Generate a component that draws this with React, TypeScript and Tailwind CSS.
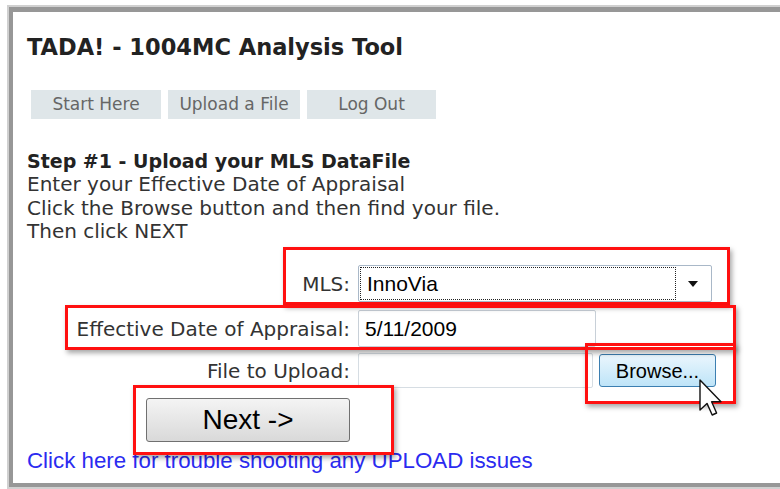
import React from 'react';

const navItems = [
  { label: 'Start Here', width: 'w-[130px]' },
  { label: 'Upload a File', width: 'w-[132px]' },
  { label: 'Log Out', width: 'w-[129px]' },
];

// Red callout boxes drawn on top of the form
const callouts = [
  'left-[283px] top-[247px] w-[447px] h-[58px]',
  'left-[65px] top-[305px] w-[671px] h-[45px]',
  'left-[585px] top-[343px] w-[151px] h-[61px]',
  'left-[133px] top-[385px] w-[261px] h-[70px]',
];

function Cursor() {
  return (
    <svg width="24" height="38" viewBox="0 0 12 19" className="absolute left-[699px] top-[379px]">
      <path
        d="M0.5 0.5 L0.5 15.5 L4 12.2 L6.6 18 L8.8 17 L6.3 11.4 L11 11.4 Z"
        fill="#fff"
        stroke="#111"
        strokeWidth="0.7"
        strokeLinejoin="round"
      />
    </svg>
  );
}

export default function App() {
  return (
    <div className="relative w-[780px] h-[489px] overflow-hidden bg-white pt-[5px] pl-[7px]">
      <div className="h-[484px] border-t-2 border-l-2 border-b-2 border-[#d0d0d0]">
        <div className="h-full border-t-[5px] border-l-[4px] border-b-[4px] border-[#979797] bg-white pl-[14px] pt-[22px] font-['DejaVu_Sans',sans-serif]">
          {/* Header */}
          <h1 className="text-[22.5px] leading-[26px] font-bold text-[#222]">TADA! - 1004MC Analysis Tool</h1>

          <nav className="flex gap-[7px] ml-[4px] mt-[30px]">
            {navItems.map((item) => (
              <div
                key={item.label}
                className={`${item.width} h-[29px] bg-[#dfe6e9] text-[#666] text-[17px] flex items-center justify-center`}
              >
                {item.label}
              </div>
            ))}
          </nav>

          {/* Instructions */}
          <div className="mt-[31px] text-[20px] leading-[23.3px] text-[#333]">
            <div className="font-bold text-[19px] text-[#222]">Step #1 - Upload your MLS DataFile</div>
            <div>Enter your Effective Date of Appraisal</div>
            <div>Click the Browse button and then find your file.</div>
            <div>Then click NEXT</div>
          </div>

          {/* Upload form */}
          <div className="grid grid-cols-[323px_auto] gap-x-[8px] mt-[22px] items-center text-[20px] text-[#333]">
            <div className="text-right">MLS:</div>
            <div className="w-[354px] h-[37px] border border-[#a9b8c8] rounded-[2px] flex items-center p-[1px] font-['Liberation_Sans',Arial,sans-serif] text-[21px] text-black">
              <div className="flex-1 h-full border border-dotted border-[#222] flex items-center pl-[6px]">InnoVia</div>
              <div className="w-[34px] flex justify-center">
                <svg width="10" height="6" viewBox="0 0 10 6">
                  <path d="M0 0 H10 L5 6 Z" fill="#111" />
                </svg>
              </div>
            </div>

            <div className="text-right mt-[8px]">Effective Date of Appraisal:</div>
            <div className="mt-[8px] w-[238px] h-[37px] border border-[#c8d0d8] rounded-[2px] flex items-center pl-[6px] font-['Liberation_Sans',Arial,sans-serif] text-[21px] text-black">
              5/11/2009
            </div>

            <div className="text-right mt-[6px]">File to Upload:</div>
            <div className="mt-[6px] flex items-center gap-[6px]">
              <div className="w-[235px] h-[35px] border border-[#d6dde3] rounded-[2px]" />
              <div className="w-[117px] h-[33px] rounded-[3px] border border-[#3c7fb1] bg-gradient-to-b from-[#eaf6fd] to-[#bee4f8] flex items-center justify-center font-['Liberation_Sans',Arial,sans-serif] text-[20px] text-black">
                Browse...
              </div>
            </div>
          </div>

          <button className="mt-[10px] ml-[119px] w-[204px] h-[44px] rounded-[3px] border border-[#707070] bg-gradient-to-b from-[#f4f4f4] to-[#d9d9d9] font-['Liberation_Sans',Arial,sans-serif] text-[28px] text-black">
            Next -&gt;
          </button>

          <div className="mt-[6px] font-['Liberation_Sans',Arial,sans-serif] text-[22.3px] leading-[25px] text-[#2b2bf0]">
            Click here for trouble shooting any UPLOAD issues
          </div>
        </div>
      </div>

      {callouts.map((pos) => (
        <div
          key={pos}
          className={`absolute ${pos} border-[3px] border-[#ff1010] shadow-[2px_3px_5px_rgba(0,0,0,0.35)]`}
        />
      ))}
      <Cursor />
    </div>
  );
}
